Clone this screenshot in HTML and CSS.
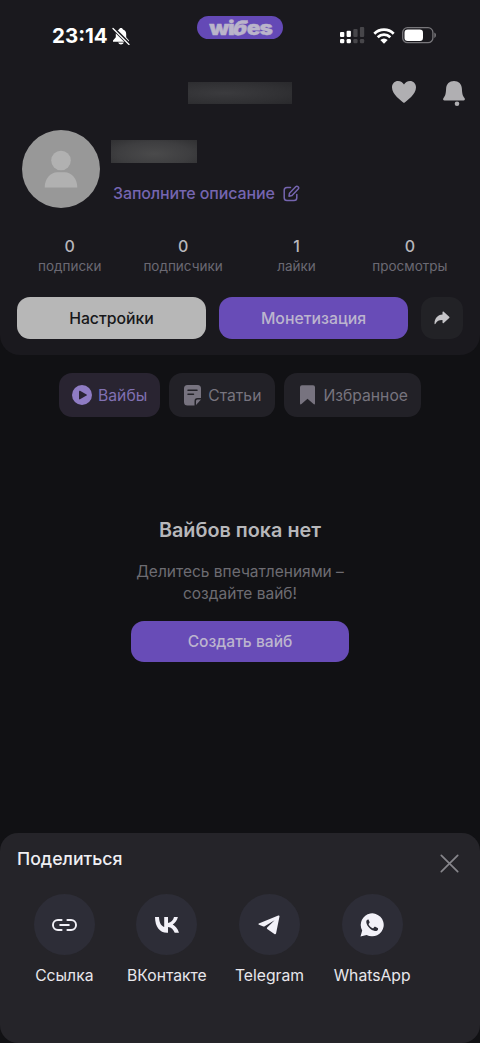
FILE: index.html
```
<!DOCTYPE html>
<html lang="ru">
<head>
<meta charset="utf-8">
<meta name="viewport" content="width=device-width, initial-scale=1">
<title>Wibes</title>
<link rel="stylesheet" href="styles.css">
</head>
<body>
<div class="screen">
  <section class="profile">
    <div class="status">
      <div class="clock"><span>23:14</span>
        <svg class="muted" width="18" height="18" viewBox="0 0 18 18"><path d="M9 1C7.900 1 7.200 1.700 7 2.500 4.800 3.300 3.800 5 3.800 7v3.200L1 13.500v1.300h16v-1.300l-2.800-3.300V7c0-2-1-3.700-3.200-4.500C10.800 1.700 10.100 1 9 1zM6.200 15.500h5.600c-.4 1.300-1.600 2-2.800 2s-2.400-.7-2.800-2z" fill="#fff"/><path d="M1.500 1.500l15.500 15.500" stroke="#1a191e" stroke-width="3.600"/><path d="M1 1.500l16 16" stroke="#fff" stroke-width="1.300" stroke-linecap="round"/></svg>
      </div>
      <div class="brand"><div class="wordmark"><span>wi</span><span class="brand-b">б</span><span>es</span></div></div>
      <div class="indicators">
        <svg class="signal" width="25" height="17" viewBox="0 0 25 17"><g fill="#fff"><rect x="0" y="5" width="4.300" height="5" rx="1"/><rect x="6.600" y="3.800" width="4.300" height="6.200" rx="1"/><rect x="0" y="12" width="4.300" height="4.300" rx="1.200"/><rect x="6.600" y="12" width="4.300" height="4.300" rx="1.200"/></g><g fill="#47464a"><rect x="13.300" y="2" width="4.300" height="8" rx="1"/><rect x="19.900" y="0" width="4.300" height="10" rx="1"/><rect x="13.300" y="12" width="4.300" height="4.300" rx="1.200"/><rect x="19.900" y="12" width="4.300" height="4.300" rx="1.200"/></g></svg>
        <svg class="wifi" width="22" height="16" viewBox="0 0 22 16"><g fill="none" stroke="#fff" stroke-width="2.700"><path d="M1.300 5.700a13.700 13.700 0 0 1 19.400 0"/><path d="M4.700 9.300a8.900 8.900 0 0 1 12.600 0"/></g><path d="M7.300 12.100a5.300 5.300 0 0 1 7.400 0L11 15.700z" fill="#fff"/></svg>
        <svg class="battery" width="35" height="17" viewBox="0 0 35 17"><rect x=".7" y=".7" width="30.200" height="15" rx="4.800" fill="none" stroke="#78777b" stroke-width="1.300"/><rect x="2.500" y="2.500" width="18.500" height="11.400" rx="3.200" fill="#fff"/><path d="M32.300 5.500c2.200.9 2.200 4.500 0 5.400z" fill="#78777b"/></svg>
      </div>
    </div>
    <div class="topbar">
      <div class="redacted handle"></div>
      <div class="top-icons">
        <svg width="26" height="24" viewBox="0 0 26 24"><path d="M13 23C10 20.500 1 14.500 1 7.500 1 3.500 3.800 1 7 1c2.700 0 5 1.600 6 3.500C14 2.600 16.300 1 19 1c3.200 0 6 2.500 6 6.500 0 7-9 13-12 15.500z" fill="#b0afb2"/></svg>
        <svg width="24" height="27" viewBox="0 0 24 27"><path d="M12 1C7.400 1 4.300 4 4.100 8.700 3.900 14 3.300 15.500 1.500 18c-.9 1.300-.2 2.500 1 2.500h19c1.200 0 1.900-1.200 1-2.500-1.800-2.500-2.400-4-2.600-9.300C19.700 4 16.600 1 12 1z" fill="#b0afb2"/><circle cx="15" cy="23.700" r="2.300" fill="#b0afb2"/></svg>
      </div>
    </div>
    <div class="person">
      <div class="avatar"><svg width="34" height="38" viewBox="0 0 34 38"><circle cx="17" cy="10.500" r="9.800"/><path d="M.7 37.500c0-9 6-15.300 12.300-15.300h8c6.300 0 12.300 6.300 12.300 15.300z"/></svg></div>
      <div class="about">
        <div class="redacted name"></div>
        <div class="describe"><span>Заполните описание</span><svg width="17" height="17" viewBox="0 0 17 17"><g fill="none" stroke="#7565b0" stroke-width="1.500" stroke-linecap="round" stroke-linejoin="round"><path d="M7.500 2.500H4A2.800 2.800 0 0 0 1.200 5.300v7.400A2.800 2.800 0 0 0 4 15.500h7a2.800 2.800 0 0 0 2.800-2.800V9.500"/><path d="M6.500 8.200l6.200-6.400a1.700 1.700 0 0 1 2.500 2.300L9 10.500l-3 .7z"/></g></svg></div>
      </div>
    </div>
    <div class="stats">
      <div><b>0</b><span>подписки</span></div>
      <div><b>0</b><span>подписчики</span></div>
      <div><b>1</b><span>лайки</span></div>
      <div><b>0</b><span>просмотры</span></div>
    </div>
    <div class="actions">
      <div class="button light">Настройки</div>
      <div class="button violet">Монетизация</div>
      <div class="share"><svg width="16" height="14" viewBox="0 0 16 14"><path d="M8.500 1.300c0-.8.700-1 1.200-.5l5.500 5c.5.400.5.800 0 1.200l-5.500 5.100c-.5.500-1.200.2-1.200-.5V9.100C5.200 9 3 10 1.500 12.700c-.4.700-1 .5-1-.2C.6 7.600 3.500 3.900 8.500 3.600z" fill="#c6c5c8"/></svg></div>
    </div>
  </section>

  <nav class="tabs">
    <div class="tab active"><svg width="20" height="20" viewBox="0 0 20 20"><circle cx="10" cy="10" r="10" fill="#8f7cc4"/><path d="M7 6.300c0-.6.500-.8 1-.6l6.500 3.700c.5.300.5.900 0 1.200L8 14.300c-.5.200-1 0-1-.6z" fill="#2a2434"/></svg><span>Вайбы</span></div>
    <div class="tab"><svg width="17" height="21" viewBox="0 0 17 21"><path d="M3.500 0h10A3.500 3.500 0 0 1 17 3.500V13h-3.500a3 3 0 0 0-3 3v4.500h-7A3.500 3.500 0 0 1 0 17V3.500A3.500 3.500 0 0 1 3.500 0z" fill="#77737f"/><path d="M12 20v-4a1.500 1.500 0 0 1 1.500-1.500H17z" fill="#77737f"/><path d="M4 5.200h9M4 9.300h5.500" stroke="#232228" stroke-width="1.500" stroke-linecap="round"/></svg><span>Статьи</span></div>
    <div class="tab saved"><svg width="15" height="20" viewBox="0 0 15.500 20"><path d="M0 2a2 2 0 0 1 2-2h11.500a2 2 0 0 1 2 2v16.700c0 1-.8 1.300-1.500.7L7.750 14l-6.200 5.400c-.8.600-1.550.3-1.550-.7z" fill="#77737f"/></svg><span>Избранное</span></div>
  </nav>

  <section class="empty">
    <h2>Вайбов пока нет</h2>
    <p>Делитесь впечатлениями –<br>создайте вайб!</p>
    <div class="button violet create">Создать вайб</div>
  </section>

  <section class="sheet">
    <div class="sheet-head"><h3>Поделиться</h3><svg width="19" height="19" viewBox="0 0 19 19"><path d="M1.300 1.300l16.400 16.400M17.700 1.300L1.300 17.700" stroke="#87868b" stroke-width="1.700" stroke-linecap="round"/></svg></div>
    <div class="targets">
      <div class="target"><div class="disc"><svg width="25" height="14" viewBox="0 0 26 14"><g fill="none" stroke="#f2f1f8" stroke-width="2" stroke-linecap="round"><path d="M10 1.800H6.200a5.200 5.200 0 0 0 0 10.400H10M16 1.800h3.800a5.200 5.200 0 0 1 0 10.400H16M8.500 7h9"/></g></svg></div><span>Ссылка</span></div>
      <div class="target"><div class="disc"><svg width="26" height="16" viewBox="0 0 26 16"><path d="M1 0h4c.2 6 2.400 9 5.200 10V0H14v6c3-.4 5.300-3 6-6h3.900c-.7 3.500-3 6.300-5.200 7.600 2.300 1.100 5 3.900 6.300 8.100h-4.300C19.600 12.800 17.300 10.300 14 10v5.700h-.9C5.500 15.700 1.200 10 1 0z" fill="#f2f1f8"/></svg></div><span>ВКонтакте</span></div>
      <div class="target"><div class="disc"><svg width="22" height="20" viewBox="0 0 22 20"><path d="M.8 8.600L20.300.6c.8-.3 1.300.1 1.200.8l-3.400 16.900c-.2 1-.9 1.300-1.700.8l-7.200-5.200c-.5-.4-.5-.9 0-1.400l7.400-7.300-9.900 6.100c-.4.300-.8.300-1.300.1L1 9.700c-.7-.2-.7-.8-.2-1.100z" fill="#f2f1f8"/></svg></div><span>Telegram</span></div>
      <div class="target"><div class="disc"><svg width="24" height="24" viewBox="0 0 24 24"><path d="M.5 23.500l1.700-6A11.500 11.500 0 1 1 6.600 21.900z" fill="#f2f1f8"/><path d="M8.500 6.600c-1.300-.3-2.400 1.200-2.200 2.700.5 3.900 4.500 8.100 8.700 8.700 1.600.2 3.200-.8 3.100-2.300 0-.4-.1-.6-.5-.8l-2.300-1.100c-.5-.2-.8-.1-1.100.3l-.7.900c-.2.300-.5.400-.9.200-1.800-.8-3-2-3.900-3.700-.2-.3-.1-.6.100-.8l.7-.9c.2-.2.200-.5.100-.8l-.9-2.100c-.1-.2-.2-.3-.2-.3z" fill="#2d2d37"/></svg></div><span>WhatsApp</span></div>
    </div>
  </section>
</div>
</body>
</html>
```
FILE: styles.css
```
* { box-sizing: border-box; }
body { margin: 0; background: #000; font-family: Inter, "Open Sans", sans-serif; }
svg { display: block; flex: none; }
h2, h3, p { margin: 0; }
.screen { width: 480px; height: 1043px; display: flex; flex-direction: column; background: #111114; overflow: hidden; }

.profile { height: 355px; flex: none; background: #1a191e; border-radius: 0 0 20px 20px; display: flex; flex-direction: column; }
.status { height: 70px; display: grid; grid-template-columns: 197px 86px 1fr; align-items: start; }
.clock { display: flex; align-items: center; padding: 24px 0 0 52px; gap: 4px; height: 47px; color: #fff; font-size: 20.5px; font-weight: 700; }
.brand { height: 23px; margin-top: 16px; border-radius: 12px; background: #6449b6; color: #bab4ca; display: flex; justify-content: center; align-items: center; font-size: 20px; font-weight: 900; letter-spacing: -1px; line-height: 23px; }
.wordmark { display: flex; margin-top: 2px; transform: scaleX(1.14); -webkit-text-stroke: 0.4px #bab4ca; }
.brand-b { transform: skewX(-12deg); }
.indicators { display: flex; align-items: center; padding: 27px 0 0 57px; }
.wifi { margin-left: 8px; }
.battery { margin-left: 7px; }
.topbar { height: 45px; display: flex; justify-content: space-between; padding: 10px 14px 0 188px; }
.top-icons { display: flex; gap: 25px; }
.redacted { background: radial-gradient(ellipse at 35% 50%, #3b3b3e, #303033 65%, #29292c); }
.handle { width: 104px; height: 22px; margin-top: 2px; }
.person { display: flex; padding: 15px 0 0 22px; gap: 11px; }
.avatar { width: 78px; height: 78px; border-radius: 50%; background: #989898; display: flex; align-items: center; justify-content: center; fill: #b1b1b1; }
.about { padding-top: 10px; }
.name { width: 86px; height: 23px; background: radial-gradient(ellipse at 50% 60%, #4a4a4b, #3e3e40 60%, #303032); }
.describe { display: flex; align-items: center; gap: 8px; margin: 20px 0 0 2px; height: 20px; color: #7565b0; font-size: 16px; font-weight: 500; letter-spacing: -0.12px; }
.stats { display: grid; grid-template-columns: repeat(4, 113.4px); padding-left: 13px; margin-top: 28px; height: 61px; text-align: center; }
.stats b { display: block; font-size: 16px; line-height: 20px; font-weight: 500; color: #b8b7bc; }
.stats span { display: block; font-size: 13.5px; line-height: 20px; color: #6b6973; }
.actions { display: flex; gap: 13px; padding-left: 17px; }
.button { display: flex; align-items: center; justify-content: center; width: 189px; height: 42px; border-radius: 13px; font-size: 15.8px; font-weight: 500; }
.light { background: #b7b7b7; color: #17171a; }
.violet { background: #684cb7; color: #bcb5ce; }
.share { width: 42px; height: 42px; border-radius: 13px; background: #222226; display: flex; align-items: center; justify-content: center; }

.tabs { display: flex; gap: 9px; justify-content: center; margin-top: 18px; }
.tab { display: flex; align-items: center; gap: 7px; height: 44px; padding: 0 14px 0 15px; border-radius: 13px; background: #222127; color: #77747e; font-size: 15.7px; }
.tab.active { gap: 6px; padding: 0 13px; background: #292431; color: #8171b3; }
.tab.saved { gap: 8px; padding: 0 13px 0 16px; }

.empty { display: flex; flex-direction: column; align-items: center; margin-top: 100px; text-align: center; }
.empty h2 { font-size: 19.8px; line-height: 26px; font-weight: 600; color: #b7b7ba; }
.empty p { margin-top: 18px; font-size: 15.5px; line-height: 21.5px; color: #6d6c72; }
.create { width: 218px; height: 41px; margin-top: 17px; font-size: 15.6px; }

.sheet { margin-top: auto; height: 210px; background: #252429; border-radius: 18px; flex: none; }
.sheet-head { display: flex; justify-content: space-between; padding: 14px 21px 0 17px; height: 61px; }
.sheet-head h3 { color: #f0eff3; font-size: 17.7px; line-height: 23px; font-weight: 500; }
.sheet-head svg { margin-top: 7px; }
.targets { display: grid; grid-template-columns: repeat(4, 102.600px); padding-left: 13px; }
.target { display: flex; flex-direction: column; align-items: center; color: #e8e7ec; font-size: 15.7px; line-height: 22px; gap: 10px; }
.disc { width: 61px; height: 61px; border-radius: 50%; background: #2d2d37; display: flex; align-items: center; justify-content: center; }
```
